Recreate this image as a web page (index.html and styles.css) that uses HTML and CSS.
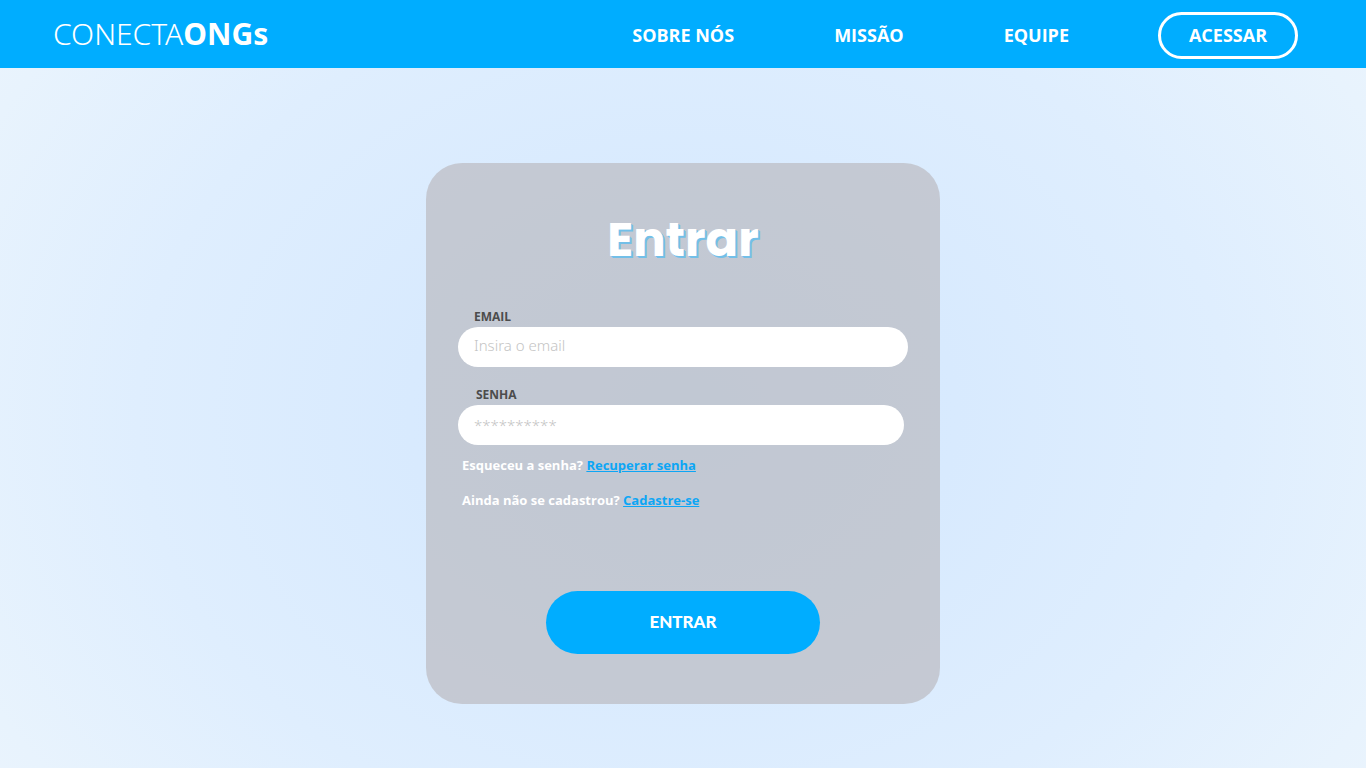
FILE: index.html
```html
<!DOCTYPE html>
<html lang="pt-BR">
<head>
<meta charset="utf-8">
<meta name="viewport" content="width=device-width, initial-scale=1">
<title>ConectaONGs</title>
<link rel="stylesheet" href="styles.css">
</head>
<body>
<header class="topbar">
  <a class="brand" href="#">CONECTA<strong>ONGs</strong></a>
  <nav class="nav">
    <a href="#">SOBRE NÓS</a>
    <a href="#">MISSÃO</a>
    <a href="#">EQUIPE</a>
  </nav>
  <button class="access" type="button">ACESSAR</button>
</header>
<main class="page">
  <form class="card">
    <h1 class="title">Entrar</h1>
    <div class="field field-email">
      <label for="email">EMAIL</label>
      <input id="email" type="email" placeholder="Insira o email">
    </div>
    <div class="field field-password">
      <label for="password">SENHA</label>
      <input id="password" type="password" placeholder="**********">
    </div>
    <div class="help">
      <p>Esqueceu a senha? <a href="#">Recuperar senha</a></p>
      <p>Ainda não se cadastrou? <a href="#">Cadastre-se</a></p>
    </div>
    <button class="submit" type="submit">ENTRAR</button>
  </form>
</main>
</body>
</html>
```
FILE: styles.css
```css
* {
  box-sizing: border-box;
}

body {
  margin: 0;
  min-height: 100vh;
  display: flex;
  flex-direction: column;
  font-family: "Open Sans", "Noto Sans", sans-serif;
  background: radial-gradient(ellipse 780px 620px at 50% 54%, #d2e8ff 0%, #d8eafe 35%, #dfeefe 70%, #e8f3fd 100%, #edf5fd 120%);
}

.topbar {
  display: flex;
  align-items: center;
  padding: 3px 68px 0 53px;
  min-height: 68px;
  background: #00adff;
}

.brand {
  margin-right: auto;
  padding-bottom: 4px;
  color: #fff;
  font-family: "Noto Sans", "Open Sans", sans-serif;
  font-size: 30px;
  font-weight: 300;
  line-height: 40px;
  text-decoration: none;
}

.brand strong {
  font-weight: 700;
}

.nav {
  display: flex;
  gap: 100px;
  margin-right: 89px;
  padding-bottom: 2px;
}

.nav a {
  color: #fff;
  font-size: 18px;
  font-weight: 700;
  text-decoration: none;
}

.access {
  width: 140px;
  height: 47px;
  padding: 0 0 2px;
  border: 3px solid #fff;
  border-radius: 24px;
  background: transparent;
  color: #fff;
  font: 700 18px "Open Sans", "Noto Sans", sans-serif;
}

.page {
  flex: 1;
  display: flex;
  justify-content: center;
  align-items: flex-start;
  padding: 95px 24px 64px;
}

.card {
  width: 100%;
  max-width: 514px;
  padding: 43px 32px 50px;
  border-radius: 36px;
  background: rgba(178, 173, 175, 0.55);
  display: flex;
  flex-direction: column;
}

.title {
  margin: 0 0 34px;
  color: #fff;
  font-family: Poppins, Inter, sans-serif;
  font-size: 48px;
  font-weight: 700;
  line-height: 68px;
  text-align: center;
  text-shadow: 1px 1px 0 #72bfe8, 2px 2px 0 #72bfe8;
}

.field {
  display: flex;
  flex-direction: column;
  margin-bottom: 20px;
}

.field label {
  padding-left: 16px;
  color: #4c4c4c;
  font-size: 12px;
  font-weight: 700;
  line-height: 18px;
  padding-bottom: 1px;
}

.field input {
  height: 40px;
  padding: 0 16px;
  border: 0;
  border-radius: 20px;
  background: #fff;
  font: 300 15px "Noto Sans", "Open Sans", sans-serif;
  color: #444;
}

.field input::placeholder {
  color: #c4c4c4;
  opacity: 1;
}

.field-email {
  margin-bottom: 19px;
}

.field-email input {
  padding-bottom: 4px;
}

.field-password {
  margin: 0 4px 11px 0;
}

.field-password label {
  padding-left: 18px;
}

.help {
  padding-left: 4px;
  margin-bottom: 82px;
  color: #fff;
  font-size: 13px;
  font-weight: 700;
  line-height: 18px;
}

.help p {
  margin: 0 0 17px;
}

.help p:last-child {
  margin: 0;
}

.help a {
  color: #0da6f5;
}

.submit {
  align-self: center;
  width: 274px;
  height: 63px;
  padding: 0 0 3px;
  border: 0;
  border-radius: 32px;
  background: #00adff;
  color: #fff;
  font: 900 17px Lato, sans-serif;
}
```
